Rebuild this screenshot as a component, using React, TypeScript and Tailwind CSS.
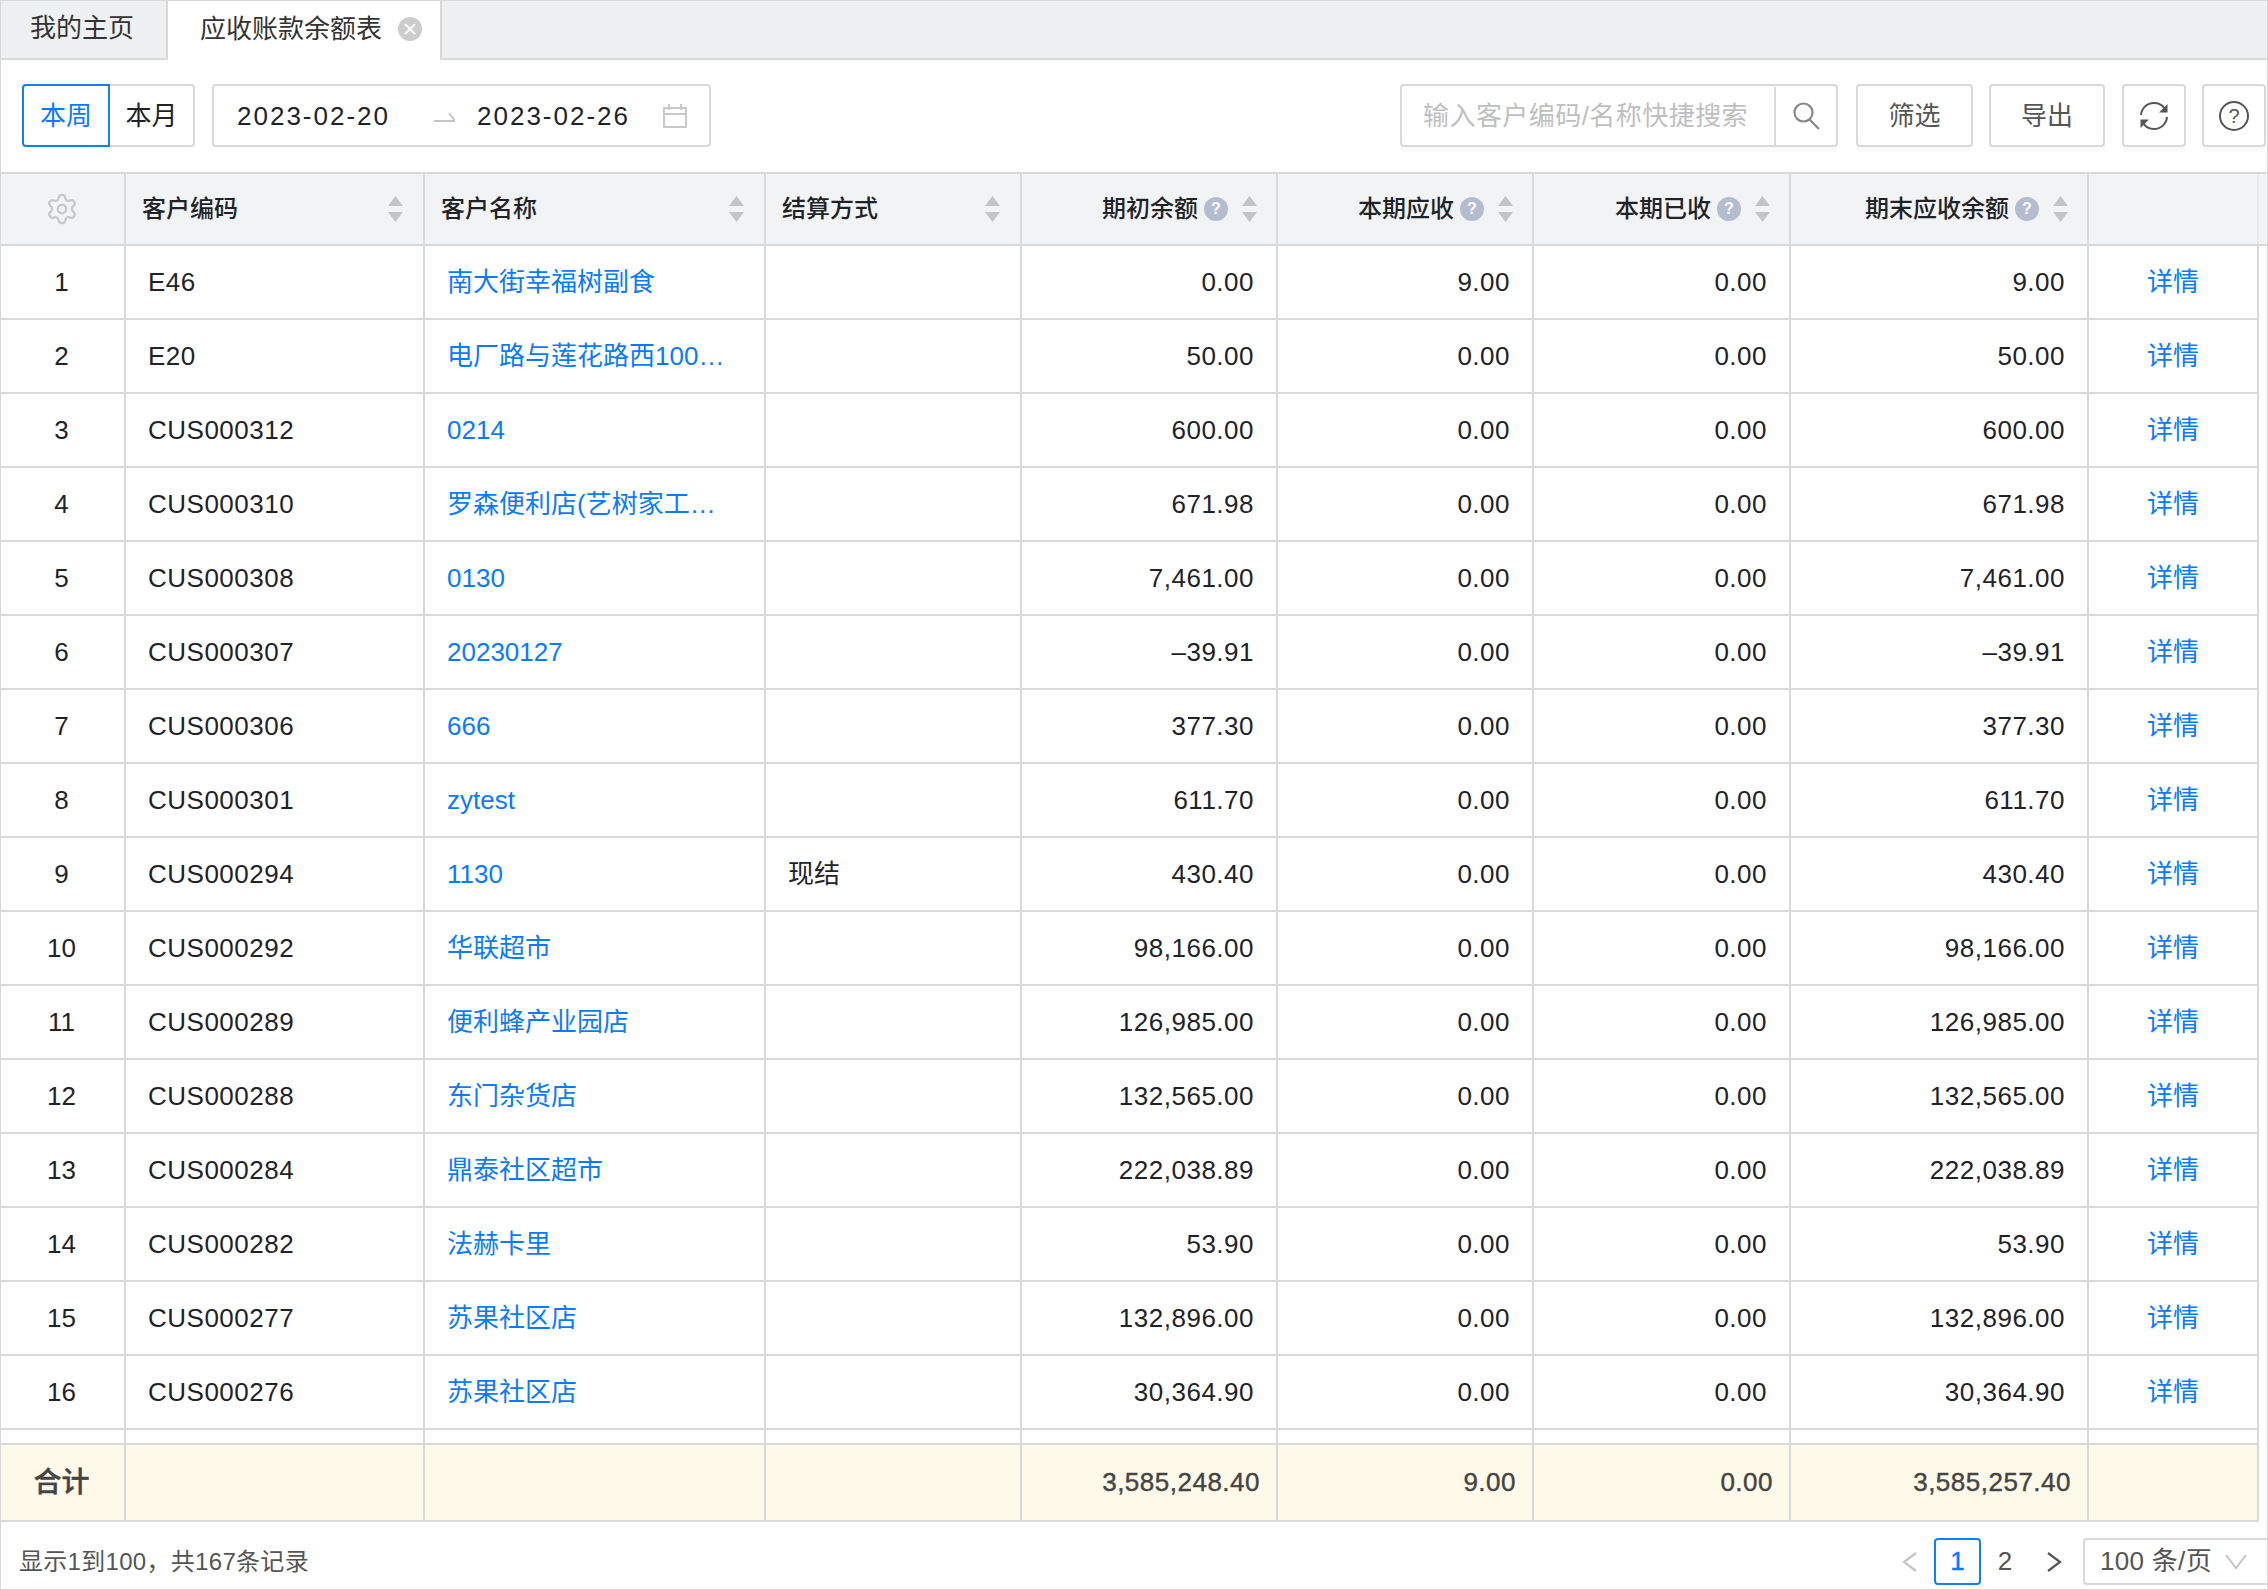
import { ChevronDown, Settings } from 'lucide-react'
import React from 'react'

interface Row {
  code: string
  name: string
  method?: string
  opening: string
  due?: string
  closing: string
}

const rows: Row[] = [
  { code: 'E46', name: '南大街幸福树副食', opening: '0.00', due: '9.00', closing: '9.00' },
  { code: 'E20', name: '电厂路与莲花路西100…', opening: '50.00', closing: '50.00' },
  { code: 'CUS000312', name: '0214', opening: '600.00', closing: '600.00' },
  { code: 'CUS000310', name: '罗森便利店(艺树家工…', opening: '671.98', closing: '671.98' },
  { code: 'CUS000308', name: '0130', opening: '7,461.00', closing: '7,461.00' },
  { code: 'CUS000307', name: '20230127', opening: '–39.91', closing: '–39.91' },
  { code: 'CUS000306', name: '666', opening: '377.30', closing: '377.30' },
  { code: 'CUS000301', name: 'zytest', opening: '611.70', closing: '611.70' },
  { code: 'CUS000294', name: '1130', method: '现结', opening: '430.40', closing: '430.40' },
  { code: 'CUS000292', name: '华联超市', opening: '98,166.00', closing: '98,166.00' },
  { code: 'CUS000289', name: '便利蜂产业园店', opening: '126,985.00', closing: '126,985.00' },
  { code: 'CUS000288', name: '东门杂货店', opening: '132,565.00', closing: '132,565.00' },
  { code: 'CUS000284', name: '鼎泰社区超市', opening: '222,038.89', closing: '222,038.89' },
  { code: 'CUS000282', name: '法赫卡里', opening: '53.90', closing: '53.90' },
  { code: 'CUS000277', name: '苏果社区店', opening: '132,896.00', closing: '132,896.00' },
  { code: 'CUS000276', name: '苏果社区店', opening: '30,364.90', closing: '30,364.90' },
]

const gridCols = 'grid grid-cols-[125px_299px_341px_256px_256px_256px_257px_298px_170px]'
const cell = 'flex items-center border-r-2 border-[#d9d9d9]'
const numCell = `${cell} justify-end pr-[22px] tracking-[0.5px]`
const footCell = `${cell} justify-end pr-4 tracking-[0.5px]`
const button = 'flex h-[63px] items-center justify-center rounded-[4px] border-2 border-[#d9d9d9] bg-white pt-px shadow-[0_5px_0_rgba(0,0,0,0.02)]'

function SortIcon() {
  return (
    <svg width="15" height="26" viewBox="0 0 15 26" className="shrink-0">
      <path d="M7.5 0 15 10H0Z" fill="#c4c4c4" />
      <path d="M0 16h15L7.5 26Z" fill="#c4c4c4" />
    </svg>
  )
}

function HeaderLeft({ title }: { title: string }) {
  return (
    <div className={`${cell} justify-between pl-4 pr-5`}>
      <span>{title}</span>
      <SortIcon />
    </div>
  )
}

function HeaderRight({ title }: { title: string }) {
  return (
    <div className={`${cell} justify-end pr-[19px]`}>
      <span>{title}</span>
      <span className="ml-[6px] flex size-6 items-center justify-center rounded-full bg-[#b3bdcf] text-base font-bold text-white">?</span>
      <span className="ml-[14px] flex">
        <SortIcon />
      </span>
    </div>
  )
}

export default function App() {
  return (
    <div className="flex h-[1590px] w-[2268px] flex-col overflow-hidden border border-[#d9d9d9] bg-white font-['Liberation_Sans','Noto_Sans_CJK_SC',sans-serif] text-[26px] text-[#1f2329]">
      {/* tabs */}
      <div className="flex h-[59px] shrink-0 border-b-2 border-[#d9d9d9] bg-[#eef0f2] text-[#333]">
        <div className="flex w-[167px] items-center border-r-2 border-[#d9d9d9] pb-[2px] pl-[29px]">我的主页</div>
        <div className="z-10 flex h-[59px] w-[274px] items-center border-r-2 border-[#d9d9d9] bg-white pb-[3px] pl-8">
          <span>应收账款余额表</span>
          <span className="ml-4 flex size-6 items-center justify-center rounded-full bg-[#cccccc]">
            <svg width="12" height="12" viewBox="0 0 12 12">
              <path d="M1 1l10 10M11 1 1 11" stroke="#fff" strokeWidth="1.8" fill="none" />
            </svg>
          </span>
        </div>
      </div>

      {/* toolbar */}
      <div className="flex h-[112px] shrink-0 items-start pl-[21px] pr-px pt-6">
        <div className="flex">
          <div className="flex h-[63px] w-[88px] items-center justify-center rounded-l-[4px] border-2 border-[#1081f3] pt-px text-[#0a7aff]">本周</div>
          <div className="flex h-[63px] w-[85px] items-center justify-center rounded-r-[4px] border-2 border-l-0 border-[#d9d9d9] pt-px">本月</div>
        </div>
        <div className="ml-[17px] flex h-[63px] w-[499px] items-center rounded-[4px] border-2 border-[#d9d9d9] pl-[23px] pt-px tracking-[2px]">
          <span className="w-[153px]">2023-02-20</span>
          <svg width="21" height="10" viewBox="0 0 21 10" className="ml-[44px] mt-[2px]">
            <path d="M0 9h21L15 1" stroke="#c4c4c4" strokeWidth="2" fill="none" />
          </svg>
          <span className="ml-[22px] w-[153px]">2023-02-26</span>
          <svg width="24" height="24" viewBox="0 0 24 24" className="ml-[33px]">
            <path d="M1 4h22v19H1ZM1 10h22M6 0v6M18 0v6" stroke="#c9c9c9" strokeWidth="2" fill="none" />
          </svg>
        </div>

        <div className="ml-auto flex gap-4">
          <div className={`${button} w-[438px] justify-start`}>
            <div className="flex-1 pl-[21px] tracking-[0.45px] text-[#bfbfbf]">输入客户编码/名称快捷搜索</div>
            <div className="flex h-full w-[62px] items-center justify-center border-l-2 border-[#d9d9d9]">
              <svg width="27" height="28" viewBox="0 0 27 28" fill="none" stroke="#888" strokeWidth="2.2">
                <circle cx="10.500" cy="10.500" r="9" />
                <path d="M16.500 17.500 26 27" />
              </svg>
            </div>
          </div>
          <div className={`${button} ml-[2px] w-[117px] text-[#555]`}>筛选</div>
          <div className={`${button} w-[116px] text-[#555]`}>导出</div>
          <div className={`${button} ml-px w-[64px]`}>
            <svg width="30" height="30" viewBox="0 0 30 30" fill="none">
              <path d="M2 14C2.600 7 8 2 15 2c4.400 0 8.300 2.100 10.600 5.500" stroke="#555" strokeWidth="2" />
              <path d="M28 16c-.6 7-6 12-13 12-4.400 0-8.300-2.100-10.600-5.500" stroke="#555" strokeWidth="2" />
              <path d="M28.500 3v8.500H20Z" fill="#555" />
              <path d="M1.500 27v-8.500H10Z" fill="#555" />
            </svg>
          </div>
          <div className={`${button} w-[64px]`}>
            <span className="flex size-[30px] items-center justify-center rounded-full border-2 border-[#555] text-[20px] text-[#555]">?</span>
          </div>
        </div>
      </div>

      {/* table head */}
      <div className="h-[74px] shrink-0 border-y-2 border-[#d9d9d9] bg-[#f2f3f5] text-2xl font-medium">
        <div className={`${gridCols} h-full`}>
          <div className={`${cell} justify-center pr-[2px]`}>
            <Settings size={34} strokeWidth={1.6} className="text-[#c8c8c8]" />
          </div>
          <HeaderLeft title="客户编码" />
          <HeaderLeft title="客户名称" />
          <HeaderLeft title="结算方式" />
          <HeaderRight title="期初余额" />
          <HeaderRight title="本期应收" />
          <HeaderRight title="本期已收" />
          <HeaderRight title="期末应收余额" />
          <div className="flex border-r-2 border-[#e9eaec]" />
        </div>
      </div>

      {/* table body */}
      <div className="w-[2258px] shrink-0">
        {rows.map((row, i) => (
          <div key={i} className={`${gridCols} h-[74px] border-b-2 border-[#d9d9d9]`}>
            <div className={`${cell} justify-center pr-[2px]`}>{i + 1}</div>
            <div className={`${cell} pl-[22px] tracking-[0.5px]`}>{row.code}</div>
            <div className={`${cell} pl-[22px] text-[#0a7aff]`}>{row.name}</div>
            <div className={`${cell} pl-[22px]`}>{row.method}</div>
            <div className={numCell}>{row.opening}</div>
            <div className={numCell}>{row.due ?? '0.00'}</div>
            <div className={numCell}>0.00</div>
            <div className={numCell}>{row.closing}</div>
            <div className={`${cell} justify-center text-[#0a7aff]`}>详情</div>
          </div>
        ))}
        <div className={`${gridCols} h-[15px] border-b-2 border-[#d9d9d9]`}>
          {Array.from({ length: 9 }).map((_, i) => (
            <div key={i} className="border-r-2 border-[#d9d9d9]" />
          ))}
        </div>
      </div>

      {/* totals */}
      <div className={`${gridCols} h-[77px] w-[2258px] shrink-0 border-b-2 border-[#d9d9d9] bg-[#fff9e9] text-[#444] [-webkit-text-stroke:0.4px]`}>
        <div className={`${cell} justify-center pr-[2px] text-[28px] font-medium`}>合计</div>
        <div className={cell} />
        <div className={cell} />
        <div className={cell} />
        <div className={footCell}>3,585,248.40</div>
        <div className={footCell}>9.00</div>
        <div className={footCell}>0.00</div>
        <div className={footCell}>3,585,257.40</div>
        <div className={cell} />
      </div>

      {/* pagination */}
      <div className="flex flex-1 items-start justify-between pl-[18px] pt-4">
        <div className="text-2xl leading-[47px] tracking-[0.3px] text-[#555]">显示1到100，共167条记录</div>
        <div className="mr-[-12px] flex items-center text-[#555]">
          <svg width="15" height="20" viewBox="0 0 15 20" fill="none" stroke="#c4c4c4" strokeWidth="2.2">
            <path d="M14 1 2 10l12 9" />
          </svg>
          <div className="ml-[17px] flex size-[47px] items-center justify-center rounded-[4px] border-2 border-[#1081f3] text-[#0a7aff] [-webkit-text-stroke:0.4px]">1</div>
          <div className="flex w-[48px] justify-center">2</div>
          <svg width="15" height="20" viewBox="0 0 15 20" fill="none" stroke="#555" strokeWidth="2.2" className="ml-[18px]">
            <path d="m1 1 12 9-12 9" />
          </svg>
          <div className="ml-[21px] flex h-[47px] w-[196px] items-center rounded-[4px] border-2 border-[#d9d9d9] pl-[15px] tracking-[0.3px]">
            <span>100 条/页</span>
            <svg width="22" height="15" viewBox="0 0 22 15" fill="none" stroke="#c4c4c4" strokeWidth="2" className="ml-[13px]">
              <path d="m1 1 10 13L21 1" />
            </svg>
          </div>
        </div>
      </div>
    </div>
  )
}
